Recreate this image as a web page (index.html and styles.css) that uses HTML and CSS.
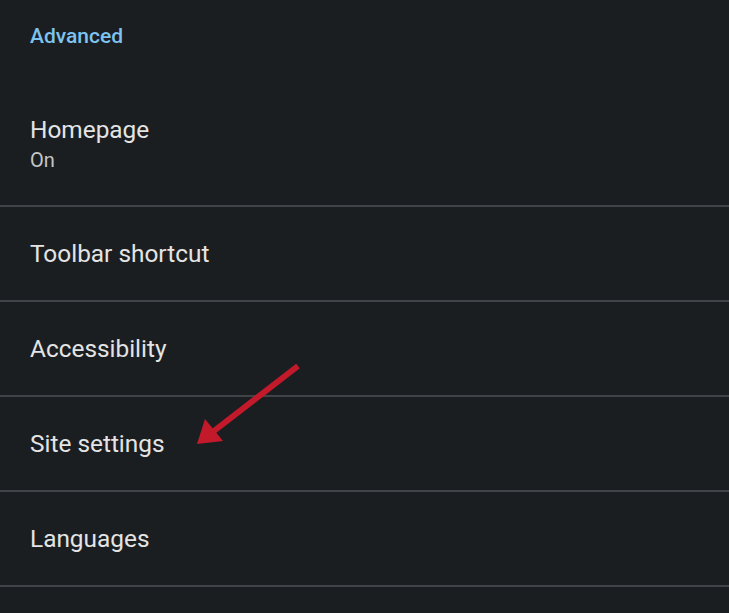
FILE: index.html
```html
<!DOCTYPE html>
<html>
<head>
<meta charset="utf-8">
<link rel="stylesheet" href="styles.css">
</head>
<body>
<div class="page">
  <div class="section-header">Advanced</div>
  <div class="row row-two">
    <div class="title">Homepage</div>
    <div class="summary">On</div>
  </div>
  <div class="row"><div class="title">Toolbar shortcut</div></div>
  <div class="row"><div class="title">Accessibility</div></div>
  <div class="row"><div class="title">Site settings</div></div>
  <div class="row"><div class="title">Languages</div></div>
  <svg class="annotation" width="729" height="613" viewBox="0 0 729 613">
    <line x1="298" y1="366" x2="210" y2="434" stroke="#c21a2b" stroke-width="6"/>
    <polygon points="197,444 205,419 223,441" fill="#c21a2b"/>
  </svg>
</div>
</body>
</html>
```
FILE: styles.css
```css
html, body {
  margin: 0;
  padding: 0;
  background: #1b1e21;
}
.page {
  position: relative;
  width: 729px;
  height: 613px;
  overflow: hidden;
  font-family: Roboto, "Liberation Sans", sans-serif;
  background: #1b1e21;
}
.section-header {
  padding: 22px 30px 0;
  font-size: 21px;
  line-height: 28px;
  font-weight: 500;
  color: #7cc3f0;
}
.row {
  display: flex;
  flex-direction: column;
  justify-content: center;
  height: 93px;
  padding: 0 30px;
  border-bottom: 2px solid #404448;
}
.row-two {
  height: auto;
  padding: 66px 30px 33px;
}
.title {
  font-size: 24.4px;
  line-height: 28px;
  color: #e4e4e4;
}
.summary {
  margin-top: 4px;
  font-size: 20px;
  line-height: 24px;
  color: #c6c6c6;
}
.annotation {
  position: absolute;
  left: 0;
  top: 0;
}
```
